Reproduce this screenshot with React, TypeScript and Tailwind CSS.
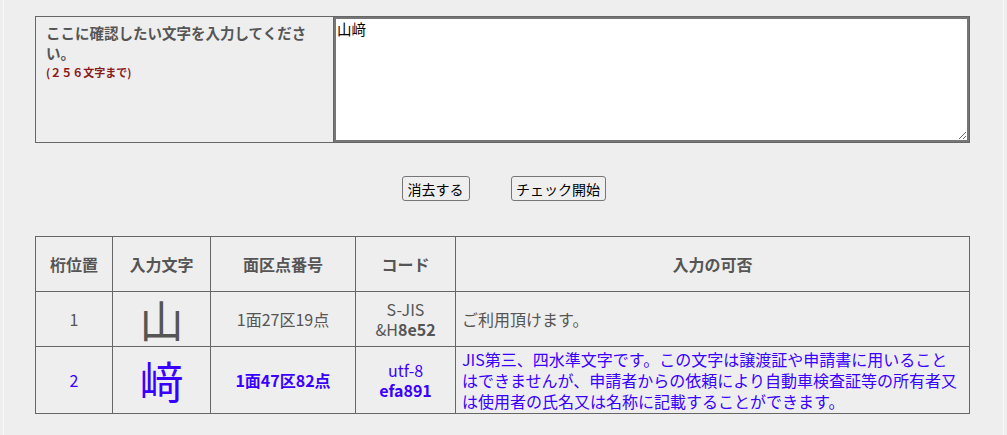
import { useState } from 'react'

const font = "font-['Noto_Sans_CJK_JP','Noto_Sans',sans-serif]"

type Row = {
  pos: number
  char: string
  kuten: React.ReactNode
  codeLabel: string
  codeValue: React.ReactNode
  message: string[]
  level: 'ok' | 'warn'
}

const rows: Row[] = [
  {
    pos: 1,
    char: '山',
    kuten: '1面27区19点',
    codeLabel: 'S-JIS',
    codeValue: (
      <>
        &amp;H<b>8e52</b>
      </>
    ),
    message: ['ご利用頂けます。'],
    level: 'ok',
  },
  {
    pos: 2,
    char: '﨑',
    kuten: <b>1面47区82点</b>,
    codeLabel: 'utf-8',
    codeValue: <b>efa891</b>,
    message: [
      'JIS第三、四水準文字です。この文字は譲渡証や申請書に用いること',
      'はできませんが、申請者からの依頼により自動車検査証等の所有者又',
      'は使用者の氏名又は名称に記載することができます。',
    ],
    level: 'warn',
  },
]

export default function App() {
  const [text, setText] = useState('山﨑')

  return (
    <div className={`${font} min-h-[435px] bg-[#eeeeee]`}>
      <div className="mx-[3px] min-h-[435px] w-[1001px] border-x border-[#f8f8f8] px-[31px] pt-[16px]">
        <table className="w-[935px] border-collapse">
          <tbody>
            <tr>
              <td className="w-[298px] border border-[#666666] px-[10px] pt-[6px] align-top">
                <p className="text-[14.5px] font-bold leading-[20px] text-[#555555]">
                  ここに確認したい文字を入力してください。
                </p>
                <p className="mt-[1px] text-[11px] font-bold leading-[16px] text-[#8b1a1a]">
                  (２５６文字まで)
                </p>
              </td>
              <td className="border border-[#666666] p-0 align-top">
                <textarea
                  value={text}
                  onChange={(e) => setText(e.target.value)}
                  className="block h-[125px] w-full resize border-2 border-[#767676] bg-white px-[1px] py-0 text-[14.5px] leading-[20px] text-black outline-none"
                />
              </td>
            </tr>
          </tbody>
        </table>

        <div className="mt-[33px] flex justify-center gap-[41px]">
          <button
            type="button"
            onClick={() => setText('')}
            className="h-[25px] w-[68px] rounded-[3px] border border-[#767676] bg-[#efefef] text-[14px] leading-none text-black"
          >
            消去する
          </button>
          <button
            type="button"
            className="h-[25px] w-[95px] rounded-[3px] border border-[#767676] bg-[#efefef] text-[14px] leading-none text-black"
          >
            チェック開始
          </button>
        </div>

        <table className="mt-[35px] w-[935px] table-fixed border-collapse text-[#555555]">
          <colgroup>
            <col className="w-[77px]" />
            <col className="w-[98px]" />
            <col className="w-[145px]" />
            <col className="w-[100px]" />
            <col />
          </colgroup>
          <thead>
            <tr className="h-[55px] text-[16px] font-bold">
              <th className="border border-[#666666]">桁位置</th>
              <th className="border border-[#666666]">入力文字</th>
              <th className="border border-[#666666]">面区点番号</th>
              <th className="border border-[#666666]">コード</th>
              <th className="border border-[#666666]">入力の可否</th>
            </tr>
          </thead>
          <tbody>
            {rows.map((row) => {
              const tone = row.level === 'warn' ? 'text-[#3a00ff]' : 'text-[#555555]'
              return (
                <tr key={row.pos} className={`${row.level === 'warn' ? 'h-[67px]' : 'h-[55px]'} ${tone}`}>
                  <td className="border border-[#666666] text-center text-[16px]">{row.pos}</td>
                  <td className="border border-[#666666] text-center text-[44px] leading-[50px]">
                    {row.char}
                  </td>
                  <td className="border border-[#666666] text-center text-[16px]">{row.kuten}</td>
                  <td className="border border-[#666666] text-center text-[16px] leading-[20px]">
                    {row.codeLabel}
                    <br />
                    {row.codeValue}
                  </td>
                  <td className="whitespace-nowrap border border-[#666666] px-[6px] text-[16px] leading-[21px]">
                    {row.message.map((line, i) => (
                      <span key={i}>
                        {i > 0 && <br />}
                        {line}
                      </span>
                    ))}
                  </td>
                </tr>
              )
            })}
          </tbody>
        </table>
      </div>
    </div>
  )
}
